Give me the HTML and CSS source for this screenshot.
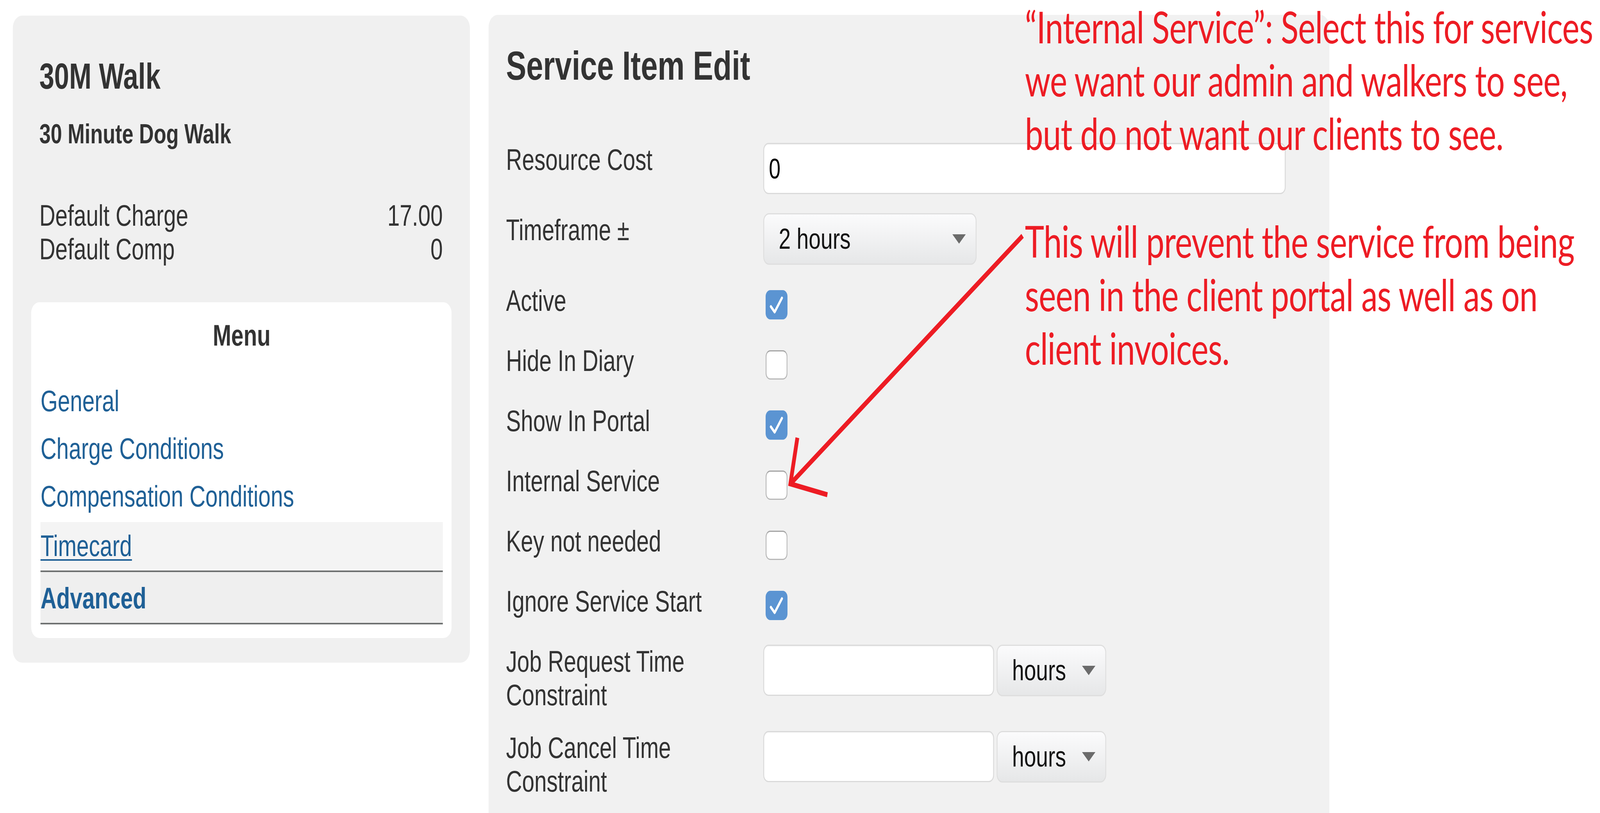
FILE: index.html
```html
<!DOCTYPE html>
<html>
<head>
    <meta name='viewport' content='width=device-width, initial-scale=1'>
    <title>Service Item Edit</title>
    <link rel="stylesheet" href="styles.css">
</head>
<body>
    <div class="frame">
        <div class="stage">
            <div class="page">
                <aside class="sidebar">
                    <div class="summary">
                        <h3>30M Walk</h3>
                        <h4>30 Minute Dog Walk</h4>
                        <div class="stats">
                            <div class="stat"><span>Default Charge</span><span>17.00</span></div>
                            <div class="stat"><span>Default Comp</span><span>0</span></div>
                        </div>
                    </div>
                    <div class="menu">
                        <h4 class="menu-title">Menu</h4>
                        <ul class="menu-list">
                            <li><a href="#">General</a></li>
                            <li><a href="#">Charge Conditions</a></li>
                            <li><a href="#">Compensation Conditions</a></li>
                            <li class="is-hover"><a href="#">Timecard</a></li>
                            <li class="is-current"><a href="#">Advanced</a></li>
                        </ul>
                    </div>
                </aside>

                <main class="edit-panel">
                    <h2>Service Item Edit</h2>
                    <form class="edit-form">
                        <div class="field-row">
                            <label class="field-label">Resource Cost</label>
                            <input class="text-input" type="text" value="0">
                        </div>
                        <div class="field-row">
                            <label class="field-label">Timeframe ±</label>
                            <div class="select">
                                <span>2 hours</span>
                                <svg class="select-arrow" viewBox="0 0 46 24"><polygon points="0,0 46,0 23,24"/></svg>
                            </div>
                        </div>
                        <div class="field-row check-row">
                            <label class="field-label">Active</label>
                            <span class="check is-on"><svg viewBox="0 0 75 75"><polyline points="18,42 31,56 56,20"/></svg></span>
                        </div>
                        <div class="field-row check-row">
                            <label class="field-label">Hide In Diary</label>
                            <span class="check"></span>
                        </div>
                        <div class="field-row check-row">
                            <label class="field-label">Show In Portal</label>
                            <span class="check is-on"><svg viewBox="0 0 75 75"><polyline points="18,42 31,56 56,20"/></svg></span>
                        </div>
                        <div class="field-row check-row">
                            <label class="field-label">Internal Service</label>
                            <span class="check"></span>
                        </div>
                        <div class="field-row check-row">
                            <label class="field-label">Key not needed</label>
                            <span class="check"></span>
                        </div>
                        <div class="field-row check-row">
                            <label class="field-label">Ignore Service Start</label>
                            <span class="check is-on"><svg viewBox="0 0 75 75"><polyline points="18,42 31,56 56,20"/></svg></span>
                        </div>
                        <div class="field-row">
                            <label class="field-label">Job Request Time Constraint</label>
                            <div class="unit-group">
                                <input class="text-input short" type="text">
                                <div class="select unit">
                                    <span>hours</span>
                                    <svg class="select-arrow" viewBox="0 0 46 24"><polygon points="0,0 46,0 23,24"/></svg>
                                </div>
                            </div>
                        </div>
                        <div class="field-row">
                            <label class="field-label">Job Cancel Time Constraint</label>
                            <div class="unit-group">
                                <input class="text-input short" type="text">
                                <div class="select unit">
                                    <span>hours</span>
                                    <svg class="select-arrow" viewBox="0 0 46 24"><polygon points="0,0 46,0 23,24"/></svg>
                                </div>
                            </div>
                        </div>
                    </form>
                </main>
            </div>

            <p class="note note-top">
                <span>“Internal Service”: Select this for services</span>
                <span>we want our admin and walkers to see,</span>
                <span>but do not want our clients to see.</span>
            </p>
            <p class="note note-bottom">
                <span>This will prevent the service from being</span>
                <span>seen in the client portal as well as on</span>
                <span>client invoices.</span>
            </p>

            <svg class="arrow" viewBox="0 0 5492 2082">
                <line x1="3510" y1="604" x2="2718" y2="1235"/>
                <polyline points="2737,1121 2713,1239 2840,1267"/>
            </svg>
        </div>
    </div>
    <script src="app.js"></script>
</body>
</html>
```

FILE: styles.css
```css
* {
    box-sizing: border-box;
    margin: 0;
    padding: 0;
}

html, body {
    width: 100%;
    height: 100%;
    overflow: hidden;
}

body {
    font-family: "Liberation Sans", Arial, sans-serif;
    font-size: 76px;
    line-height: 86px;
    color: #333;
    background: #fff;
}

.frame {
    width: 100vw;
    height: 100vh;
    overflow: hidden;
}

/* the annotated screenshot is 5492px wide; app.js squeezes it to the window width */
.stage {
    position: relative;
    width: 5492px;
    height: 2082px;
    overflow: hidden;
    transform-origin: 0 0;
    transform: scaleX(var(--fit, 1));
}

.page {
    display: flex;
    align-items: flex-start;
    gap: 64px;
    padding: 38px 0 0 44px;
}

/* left column */

.sidebar {
    width: 1569px;
    margin-top: 2px;
    padding: 63px;
    background: #f0f0f0;
    border-radius: 32px;
}

.summary {
    padding: 0 30px 0 28px;
}

.summary h3 {
    font-size: 92px;
    line-height: 106px;
    margin-top: 39px;
}

.summary h4 {
    font-size: 70px;
    line-height: 80px;
    margin-top: 55px;
}

.stats {
    margin-top: 126px;
}

.stat {
    display: flex;
    justify-content: space-between;
}

.menu {
    margin-top: 93px;
    padding: 42px 30px 35px 32px;
    background: #fff;
    border-radius: 28px;
}

.menu-title {
    text-align: center;
    font-size: 76px;
    line-height: 86px;
}

.menu-list {
    list-style: none;
    margin-top: 63px;
}

.menu-list li {
    padding: 19px 0 17px;
}

.menu-list a {
    color: #1f6096;
    text-decoration: none;
}

.menu-list .is-hover {
    margin-top: 6px;
    padding: 18px 0 20px;
    background: #f4f4f4;
    border-bottom: 4px solid #6e7171;
}

.menu-list .is-hover a {
    text-decoration: underline;
    text-decoration-thickness: 4px;
    text-underline-offset: 8px;
}

.menu-list .is-current {
    padding: 24px 0 20px;
    background: #efefef;
    border-bottom: 4px solid #6e7171;
}

.menu-list .is-current a {
    font-weight: bold;
}

/* edit form */

.edit-panel {
    width: 2886px;
    height: 2044px;
    padding: 70px 60px;
    background: #f1f1f1;
    border-radius: 32px 32px 0 0;
}

.edit-panel h2 {
    font-size: 104px;
    line-height: 120px;
    margin-bottom: 138px;
}

.field-row {
    display: flex;
    align-items: flex-start;
    margin-bottom: 49px;
}

.field-label {
    flex: 0 0 883px;
}

.check-row {
    height: 105px;
}

.text-input {
    width: 1793px;
    height: 131px;
    padding: 0 16px;
    font-family: "Liberation Sans", Arial, sans-serif;
    font-size: 72px;
    color: #000;
    background: #fff;
    border: 3px solid #dadada;
    border-radius: 18px;
    box-shadow: inset 0 2px 2px rgba(0, 0, 0, 0.04);
    outline: none;
}

.text-input.short {
    width: 792px;
}

.select {
    display: flex;
    align-items: center;
    justify-content: space-between;
    width: 732px;
    height: 132px;
    padding: 0 34px 0 50px;
    font-size: 74px;
    color: #111;
    background: linear-gradient(#fbfbfc, #e6e7e8);
    border: 3px solid #dedede;
    border-radius: 20px;
}

.select.unit {
    width: 376px;
}

.select-arrow {
    width: 46px;
    height: 24px;
    fill: #6b6b6b;
}

.unit-group {
    display: flex;
    gap: 9px;
}

.check {
    display: block;
    width: 75px;
    height: 75px;
    margin: 16px 0 0 8px;
    background: #fff;
    border: 3px solid #b8b8b8;
    border-top-color: #a4a4a4;
    border-radius: 16px;
}

.check.is-on {
    background: #5b94d2;
    border-color: #5b94d2;
}

.check svg {
    display: block;
    width: 75px;
    height: 75px;
    margin: -3px 0 0 -3px;
    fill: none;
    stroke: #fff;
    stroke-width: 7;
    stroke-linecap: round;
    stroke-linejoin: round;
}

/* red annotations drawn over the screenshot */

.note {
    position: absolute;
    left: 3518px;
    font-family: Lato, "Open Sans", sans-serif;
    font-size: 112px;
    line-height: 137px;
    letter-spacing: -1px;
    color: #ed1c24;
    white-space: nowrap;
}

.note span {
    display: block;
}

.note-top {
    top: 0;
}

.note-top span:first-child {
    line-height: 135px;
}

.note-bottom {
    top: 548px;
}

.arrow {
    position: absolute;
    left: 0;
    top: 0;
    width: 5492px;
    height: 2082px;
    pointer-events: none;
    fill: none;
    stroke: #ed1c24;
    stroke-width: 13;
    stroke-miterlimit: 10;
}
```

FILE: app.js
```js
// fit the 5492px wide layout into whatever width the window really has
function fitStage() {
    const fit = Math.min(1, window.innerWidth / 5492);
    document.documentElement.style.setProperty('--fit', fit);
}

fitStage();
window.addEventListener('resize', fitStage);
```
